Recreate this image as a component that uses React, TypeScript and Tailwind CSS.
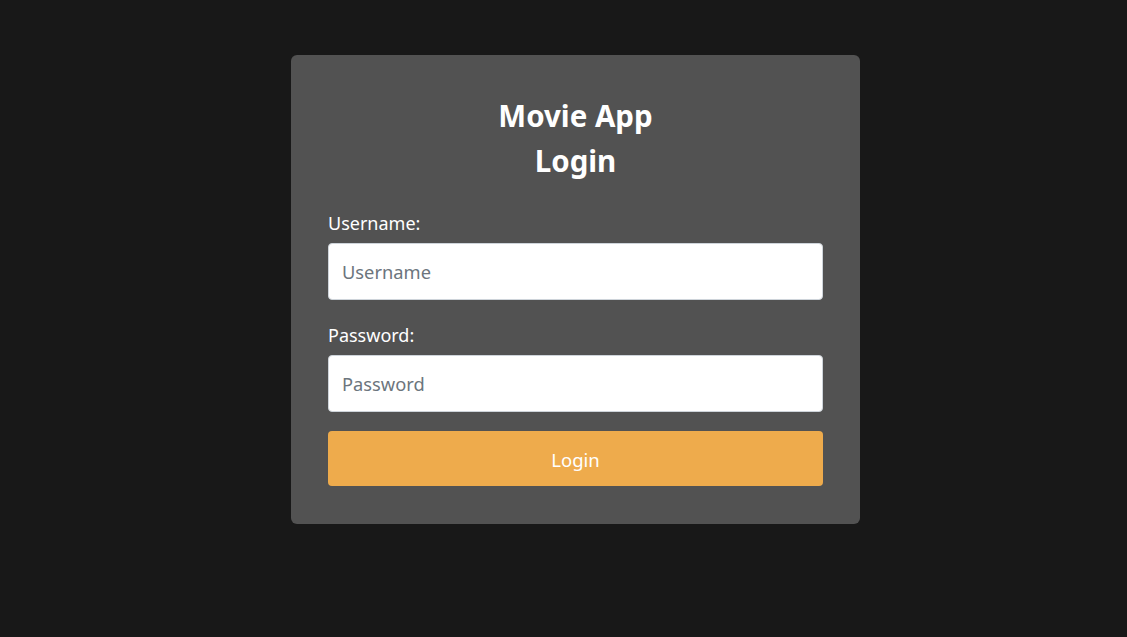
export default function App() {
  return (
    <div className="min-h-[637px] w-full bg-[#181818] font-['Noto_Sans',sans-serif] flex justify-center pt-[55px] pl-[24px]">
      <div className="w-[569px] h-[469px] bg-[#525252] rounded-[6px] px-[37px] pt-[38px]">
        <h1 className="text-center text-white font-bold text-[29.5px] leading-[45px]">
          Movie App
          <br />
          Login
        </h1>
        <form className="mt-[26px] flex flex-col" onSubmit={(e) => e.preventDefault()}>
          <label className="text-white text-[18px] leading-[27px] pt-[1px] -mb-[1px]">Username:</label>
          <input
            type="text"
            placeholder="Username"
            className="mt-[6.5px] h-[57px] w-full bg-white rounded-[4px] border border-[#ced4da] px-[13px] pt-[1px] text-[18.3px] text-[#212529] placeholder:text-[#6c757d] outline-none"
          />
          <label className="mt-[21.5px] text-white text-[18px] leading-[27px] pt-[1px] -mb-[1px]">Password:</label>
          <input
            type="password"
            placeholder="Password"
            className="mt-[6.5px] h-[57px] w-full bg-white rounded-[4px] border border-[#ced4da] px-[13px] pt-[1px] text-[18.3px] text-[#212529] placeholder:text-[#6c757d] outline-none"
          />
          <button
            type="submit"
            className="mt-[19px] h-[55px] w-full bg-[#eeab4c] rounded-[4px] text-white text-[18.5px] pt-[3px]"
          >
            Login
          </button>
        </form>
      </div>
    </div>
  );
}
